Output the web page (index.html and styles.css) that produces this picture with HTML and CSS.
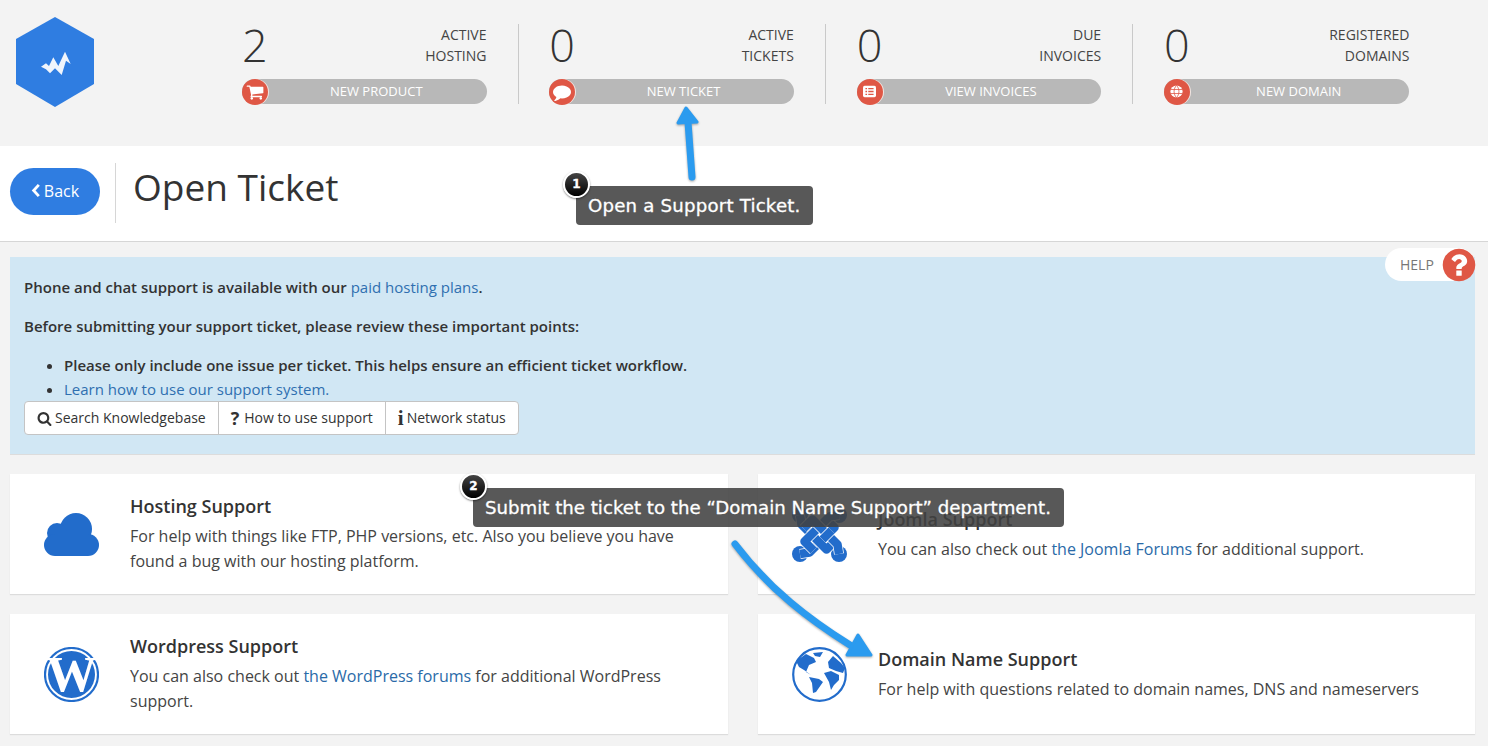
FILE: index.html
```html
<!DOCTYPE html>
<html lang="en">
<head>
<meta charset="utf-8">
<title>Open Ticket</title>
<link rel="stylesheet" href="styles.css">
</head>
<body>
<header class="top">
  <svg class="logo" viewBox="0 0 78 90"><polygon class="hex" points="39,0 78,22 78,67 39,90 0,67 0,22"/><path class="zig" d="M25 49.700 L30 46.300 L33 49 L37.300 40.300 L42.300 49 L49 34.700 L54.700 47 L50 43.700 L45.700 58 L39 51.300 L34 56.300 L30 52.300 Z"/></svg>
  <div class="stats">
    <div class="stat">
      <div class="stat-head"><span class="num">2</span><span class="label">Active<br>Hosting</span></div>
      <a class="pill"><span class="pill-icon"><svg class="ic-lg" viewBox="0 0 1792 1792"><path d="M704 1536q0 52-38 90t-90 38-90-38-38-90 38-90 90-38 90 38 38 90zm896 0q0 52-38 90t-90 38-90-38-38-90 38-90 90-38 90 38 38 90zm128-1088v512q0 24-16.500 42.500t-40.500 21.500l-1044 122q13 60 13 70 0 16-24 64h920q26 0 45 19t19 45-19 45-45 19h-1024q-26 0-45-19t-19-45q0-11 8-31.500t16-36 21.500-40 15.500-29.500l-177-823h-204q-26 0-45-19t-19-45 19-45 45-19h256q16 0 28.500 6.500t19.500 15.500 13 24.500 8 26 5.500 29.500 4.500 26h1201q26 0 45 19t19 45z"/></svg></span><span class="pill-text">New Product</span></a>
    </div>
    <div class="stat">
      <div class="stat-head"><span class="num">0</span><span class="label">Active<br>Tickets</span></div>
      <a class="pill"><span class="pill-icon"><svg class="ic-lg" viewBox="0 0 1792 1792"><path d="M1792 896q0 174-120 321.500t-326 233-450 85.500q-70 0-145-8-198 175-460 242-49 14-114 22-17 2-30.500-9t-17.500-29v-1q-3-4-.5-12t2-10 4.500-9.500l6-9 7-8.500 8-9q7-8 31-34.500t34.500-38 31-39.500 32.500-51 27-59 26-76q-157-89-247.500-220t-90.500-281q0-130 71-248.500t191-204.500 286-136.500 348-50.500q244 0 450 85.500t326 233 120 321.500z"/></svg></span><span class="pill-text">New Ticket</span></a>
    </div>
    <div class="stat">
      <div class="stat-head"><span class="num">0</span><span class="label">Due<br>Invoices</span></div>
      <a class="pill"><span class="pill-icon"><svg viewBox="0 0 16 14"><rect width="16" height="14" rx="2" fill="#fff"/><path class="rline" d="M3 3.500h2M6.500 3.500h6.500M3 7h2M6.500 7h6.500M3 10.500h2M6.500 10.500h6.500"/></svg></span><span class="pill-text">View Invoices</span></a>
    </div>
    <div class="stat">
      <div class="stat-head"><span class="num">0</span><span class="label">Registered<br>Domains</span></div>
      <a class="pill"><span class="pill-icon"><svg viewBox="0 0 16 16"><circle cx="8" cy="8" r="7.500" fill="#fff"/><path class="rline2" d="M.5 5.500h15M.5 10.500h15M8 .5c-4 4-4 11 0 15M8 .5c4 4 4 11 0 15"/></svg></span><span class="pill-text">New Domain</span></a>
    </div>
  </div>
</header>

<section class="titlebar">
  <a class="back"><svg viewBox="0 0 10 16"><path d="M8 2 L2.500 8 L8 14"/></svg>Back</a>
  <h1>Open Ticket</h1>
</section>

<main class="content">
  <a class="help">Help<svg viewBox="0 0 1792 1792"><circle cx="896" cy="896" r="640" fill="#fff"/><path d="M1024 1376v-192q0-14-9-23t-23-9h-192q-14 0-23 9t-9 23v192q0 14 9 23t23 9h192q14 0 23-9t9-23zm256-672q0-88-55.500-163t-138.500-116-170-41q-243 0-371 213-15 24 8 42l132 100q7 6 19 6 16 0 25-12 53-68 86-92 34-24 86-24 48 0 85.500 26t37.500 59q0 38-20 61t-68 45q-63 28-115.500 86.500t-52.500 125.500v36q0 14 9 23t23 9h192q14 0 23-9t9-23q0-19 21.500-49.500t54.500-49.500q32-18 49-28.500t46-35 44.500-48 28-60.500 12.500-81zm384 192q0 209-103 385.500t-279.500 279.500-385.500 103-385.500-103-279.500-279.500-103-385.500 103-385.500 279.500-279.500 385.500-103 385.500 103 279.500 279.500 103 385.500z"/></svg></a>

  <div class="alert">
    <p>Phone and chat support is available with our <a>paid hosting plans</a>.</p>
    <p>Before submitting your support ticket, please review these important points:</p>
    <ul>
      <li>Please only include one issue per ticket. This helps ensure an efficient ticket workflow.</li>
      <li><a>Learn how to use our support system.</a></li>
    </ul>
    <div class="btn-group">
      <a class="btn"><svg class="btn-icon" viewBox="0 0 1792 1792"><path d="M1216 832q0-185-131.500-316.500t-316.500-131.500-316.500 131.500-131.500 316.500 131.500 316.500 316.500 131.500 316.500-131.500 131.500-316.500zm512 832q0 52-38 90t-90 38q-54 0-90-38l-343-342q-179 124-399 124-143 0-273.500-55.500t-225-150-150-225-55.500-273.500 55.500-273.500 150-225 225-150 273.500-55.500 273.500 55.500 225 150 150 225 55.500 273.500q0 220-124 399l343 343q37 37 37 90z"/></svg>Search Knowledgebase</a>
      <a class="btn"><b class="glyph">?</b>How to use support</a>
      <a class="btn"><b class="glyph serif">i</b>Network status</a>
    </div>
  </div>

  <div class="cards">
    <article class="card">
      <svg class="card-icon" viewBox="0 0 55 55"><circle cx="32" cy="22" r="16"/><circle cx="13" cy="26" r="10"/><circle cx="11" cy="38" r="11"/><circle cx="44" cy="38" r="11"/><rect x="11" y="24" width="33" height="25"/></svg>
      <div><h2>Hosting Support</h2><p>For help with things like FTP, PHP versions, etc. Also you believe you have found a bug with our hosting platform.</p></div>
    </article>
    <article class="card">
      <svg class="card-icon" viewBox="0 0 55 55">
        <circle cx="8" cy="8" r="8"/><circle cx="47" cy="8" r="8"/><circle cx="8" cy="47" r="8"/><circle cx="47" cy="47" r="8"/>
        <path class="j-w" d="M8 47 L17.500 45.500 L42.500 20.500 L33.500 11.500"/><path class="j-b" d="M8 47 L17.500 45.500 L42.500 20.500 L33.500 11.500"/>
        <path class="j-w" d="M8 8 L9.500 17.500 L34.500 42.500 L43.500 33.500"/><path class="j-b" d="M8 8 L9.500 17.500 L34.500 42.500 L43.500 33.500"/>
        <path class="j-w" d="M47 8 L37.500 9.500 L12.500 34.500 L21.500 43.500"/><path class="j-b" d="M47 8 L37.500 9.500 L12.500 34.500 L21.500 43.500"/>
        <path class="j-w" d="M47 47 L45.500 37.500 L20.500 12.500 L11.500 21.500"/><path class="j-b" d="M47 47 L45.500 37.500 L20.500 12.500 L11.500 21.500"/>
        <path class="j-w" d="M30.500 32.500 L39.500 23.500"/><path class="j-b" d="M30.500 32.500 L39.500 23.500"/>
      </svg>
      <div><h2>Joomla Support</h2><p>You can also check out <a>the Joomla Forums</a> for additional support.</p></div>
    </article>
    <article class="card">
      <svg class="card-icon" viewBox="0 0 55 55"><circle class="ring" cx="27.500" cy="27.500" r="26.500"/><circle cx="27.500" cy="27.500" r="23.500"/><text class="wp" x="27.500" y="44" text-anchor="middle">W</text></svg>
      <div><h2>Wordpress Support</h2><p>You can also check out <a>the WordPress forums</a> for additional WordPress support.</p></div>
    </article>
    <article class="card">
      <svg class="card-icon" viewBox="0 0 55 55"><circle class="ring" cx="27.500" cy="27.500" r="26.300"/><path d="M4 14 L14 7 L22 11 L24 15 L17 18 L14 25 L19 28 L12 23 L7 20 Z"/><path d="M17 30 L27 32 L31 35 L24 45 L21 46 L20 36 Z"/><path d="M21 6 L31 5 L28 10 L23 9 Z"/><path d="M32 26 L39 24 L47 28 L47 33 L42 38 L39 43 L37 35 Z"/><path d="M36 15 L41 9 L49 16 L53 21 L51 26 L44 24 L37 21 Z"/></svg>
      <div><h2>Domain Name Support</h2><p>For help with questions related to domain names, DNS and nameservers</p></div>
    </article>
  </div>
</main>

<svg class="arrows" viewBox="0 0 1488 746">
  <g class="arrow">
    <path class="shaft" d="M692 177 L688 122"/>
    <path class="head" d="M686 108 L697 122 L678 123 Z"/>
  </g>
  <g class="arrow">
    <path class="shaft" d="M735 544 C770 590 810 620 850 645"/>
    <path class="head" d="M858 635 L871 655 L847 655 Z"/>
  </g>
</svg>
<div class="note note-one"><span class="badge">1</span>Open a Support Ticket.</div>
<div class="note note-two"><span class="badge">2</span>Submit the ticket to the “Domain Name Support” department.</div>
</body>
</html>
```
FILE: styles.css
```css
* { box-sizing: border-box; }
html, body { margin: 0; height: 746px; overflow: hidden; }
body { position: relative; background: #f3f3f3; color: #333; font-family: "Open Sans", "Liberation Sans", sans-serif; font-size: 16px; }
a { color: #2a6aa8; text-decoration: none; }

.top { height: 146px; display: flex; align-items: flex-start; padding: 17px 0 0 16px; }
.logo { width: 78px; height: 90px; flex: none; }
.hex { fill: #2f7de1; }
.zig { fill: #f0f5fc; }
.stats { display: grid; grid-template-columns: repeat(4, 307.330px); margin: 7px 0 0 148px; }
.stat { width: 276.500px; height: 80px; padding-right: 31px; border-right: 1px solid #c9c9c9; }
.stat:last-child { border-right: 0; }
.stat-head { display: flex; justify-content: space-between; height: 55px; }
.num { font-size: 45px; font-weight: 300; line-height: 41px; color: #333; }
.label { text-transform: uppercase; font-size: 14px; line-height: 21px; text-align: right; color: #444; }
.pill { display: flex; align-items: center; height: 25px; border-radius: 13px; background: #b8b8b8; color: #fff; }
.pill-icon { flex: none; width: 26px; height: 26px; border-radius: 50%; background: #df5745; box-shadow: 1px 0 0 #f3e6e2; display: flex; align-items: center; justify-content: center; }
.pill-icon svg { width: 13px; height: 13px; fill: #fff; }
.pill-icon .ic-lg { width: 18px; height: 18px; }
.pill-text { flex: 1; text-align: center; text-transform: uppercase; font-size: 13px; padding: 0 2px 2px 0; }
.rline { stroke: #df5745; stroke-width: 1.600; fill: none; }
.rline2 { stroke: #df5745; stroke-width: 1; fill: none; }

.titlebar { height: 96px; background: #fff; border-bottom: 1px solid #d6d6d6; display: flex; align-items: flex-start; padding: 17px 0 0 10px; }
.back { width: 90px; height: 47px; margin-top: 5px; border-radius: 24px; background: #2f7de1; color: #fff; display: flex; align-items: center; justify-content: center; gap: 3px; font-size: 16px; padding-bottom: 2px; }
.back svg { width: 10px; height: 15px; fill: none; stroke: #fff; stroke-width: 3; }
h1 { margin: 0 0 0 15px; height: 60px; padding-left: 17px; border-left: 1px solid #d6d6d6; font-size: 37px; font-weight: 400; line-height: 48px; color: #333; }

.content { position: relative; padding: 15px 13px 0 10px; }
.help { position: absolute; top: 6px; right: 13px; width: 90px; height: 33px; border-radius: 17px; background: #fff; color: #777; text-transform: uppercase; font-size: 14px; display: flex; align-items: center; justify-content: space-between; padding-left: 15px; }
.help svg { width: 38px; height: 38px; margin-right: -3px; fill: #df5745; }

.alert { height: 198px; background: #d1e7f4; padding: 18px 14px 0; font-size: 15px; font-weight: 600; line-height: 24px; border-bottom: 1px solid #dcdcdc; }
.alert a { font-weight: 400; color: #2f6fb0; }
.alert p { margin: 0 0 15px; }
.alert ul { margin: 0; padding-left: 40px; }
.btn-group { display: inline-flex; background: #fff; border: 1px solid #c4c4c4; border-radius: 4px; height: 34px; font-weight: 400; font-size: 14px; }
.alert .btn { display: flex; align-items: center; gap: 3px; padding: 0 12px; color: #333; border-right: 1px solid #c4c4c4; }
.alert .btn:last-child { border-right: 0; }
.btn-icon { width: 15px; height: 15px; fill: #333; }
.glyph { font-weight: 700; font-size: 18px; line-height: 1; margin-right: 2px; }
.serif { font-family: "Liberation Serif", serif; font-size: 21px; margin-right: 0; }

.cards { display: grid; grid-template-columns: 718px 717px; justify-content: space-between; gap: 20px 30px; margin-top: 19px; }
.card { height: 120px; background: #fff; box-shadow: 0 1px 1px #dcdcdc; display: flex; align-items: center; padding: 0 34px 0 34px; gap: 31px; }
.card-icon { flex: none; width: 55px; height: 55px; fill: #226ccb; }
.card h2 { margin: 0 0 6px; font-size: 18px; font-weight: 600; line-height: 24px; }
.card p { margin: 0; font-size: 16px; line-height: 25px; color: #444; }
.ring { fill: none; stroke: #226ccb; stroke-width: 2.200; }
.wp { fill: #fff; font-family: "Liberation Serif", serif; font-weight: 700; font-size: 50px; }
.j-w { fill: none; stroke: #fff; stroke-width: 10; stroke-linejoin: round; }
.j-b { fill: none; stroke: #226ccb; stroke-width: 8.500; stroke-linejoin: round; }

.arrows { position: absolute; left: 0; top: 0; width: 1488px; height: 746px; pointer-events: none; }
.arrow { filter: drop-shadow(0 1px 1px rgba(0,0,0,.35)); }
.shaft { fill: none; stroke: #2b9bef; stroke-width: 7; stroke-linecap: round; }
.head { fill: #2b9bef; stroke: #2b9bef; stroke-width: 3; stroke-linejoin: round; }

.note { position: absolute; height: 39px; padding: 0 12px; border-radius: 4px; background: rgba(65,65,65,.88); color: #fff; font-family: "DejaVu Sans", sans-serif; font-size: 18.170px; line-height: 40px; white-space: nowrap; -webkit-text-stroke: .3px #fff; }
.note-one { left: 576px; top: 186px; width: 237px; letter-spacing: .2px; }
.note-two { left: 473px; top: 488px; width: 591px; }
.badge { position: absolute; left: -13px; top: -15px; width: 27px; height: 27px; border-radius: 50%; border: 2px solid #fff; background: linear-gradient(#444, #000); box-shadow: 0 1px 2px rgba(0,0,0,.5); font-size: 12px; font-weight: 700; line-height: 23px; text-align: center; letter-spacing: 0; }
```
